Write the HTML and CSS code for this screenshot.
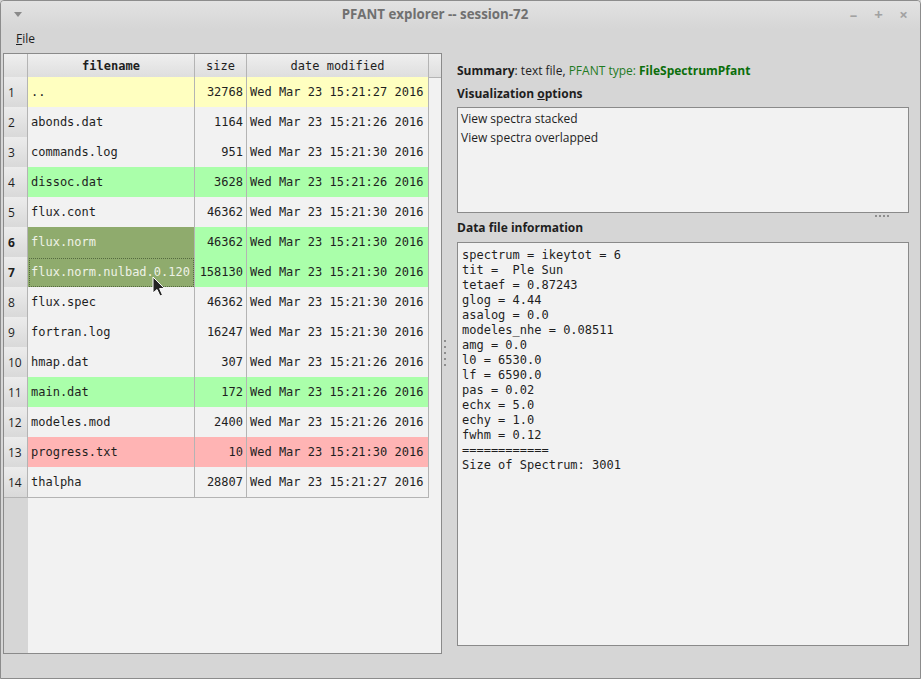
FILE: index.html
```html
<!DOCTYPE html>
<html>
<head>
<meta charset="utf-8">
<link rel="stylesheet" href="styles.css">
</head>
<body>
<div class="window">
  <div class="titlebar">
    <span class="tb-menu"></span>
    <span class="title">PFANT explorer -- session-72</span>
    <span class="tb-ctrls"><span>&#8211;</span><span>+</span><span>&#215;</span></span>
  </div>
  <div class="menubar"><span class="menu"><u>F</u>ile</span></div>
  <div class="main">
    <div class="tableview">
      <div class="hrow">
        <div class="hcell corner"></div>
        <div class="hcell bold">filename</div>
        <div class="hcell">size</div>
        <div class="hcell">date modified</div>
        <div class="hcell filler"></div>
      </div>
      <div class="row yellow"><div class="vh">1</div><div class="c fn">..</div><div class="c sz">32768</div><div class="c dt">Wed Mar 23 15:21:27 2016</div></div>
      <div class="row"><div class="vh">2</div><div class="c fn">abonds.dat</div><div class="c sz">1164</div><div class="c dt">Wed Mar 23 15:21:26 2016</div></div>
      <div class="row"><div class="vh">3</div><div class="c fn">commands.log</div><div class="c sz">951</div><div class="c dt">Wed Mar 23 15:21:30 2016</div></div>
      <div class="row green"><div class="vh">4</div><div class="c fn">dissoc.dat</div><div class="c sz">3628</div><div class="c dt">Wed Mar 23 15:21:26 2016</div></div>
      <div class="row"><div class="vh">5</div><div class="c fn">flux.cont</div><div class="c sz">46362</div><div class="c dt">Wed Mar 23 15:21:30 2016</div></div>
      <div class="row green"><div class="vh sel">6</div><div class="c fn selected">flux.norm</div><div class="c sz">46362</div><div class="c dt">Wed Mar 23 15:21:30 2016</div></div>
      <div class="row green"><div class="vh sel">7</div><div class="c fn selected focus">flux.norm.nulbad.0.120</div><div class="c sz">158130</div><div class="c dt">Wed Mar 23 15:21:30 2016</div></div>
      <div class="row"><div class="vh">8</div><div class="c fn">flux.spec</div><div class="c sz">46362</div><div class="c dt">Wed Mar 23 15:21:30 2016</div></div>
      <div class="row"><div class="vh">9</div><div class="c fn">fortran.log</div><div class="c sz">16247</div><div class="c dt">Wed Mar 23 15:21:30 2016</div></div>
      <div class="row"><div class="vh">10</div><div class="c fn">hmap.dat</div><div class="c sz">307</div><div class="c dt">Wed Mar 23 15:21:26 2016</div></div>
      <div class="row green"><div class="vh">11</div><div class="c fn">main.dat</div><div class="c sz">172</div><div class="c dt">Wed Mar 23 15:21:26 2016</div></div>
      <div class="row"><div class="vh">12</div><div class="c fn">modeles.mod</div><div class="c sz">2400</div><div class="c dt">Wed Mar 23 15:21:26 2016</div></div>
      <div class="row pink"><div class="vh">13</div><div class="c fn">progress.txt</div><div class="c sz">10</div><div class="c dt">Wed Mar 23 15:21:30 2016</div></div>
      <div class="row"><div class="vh">14</div><div class="c fn">thalpha</div><div class="c sz">28807</div><div class="c dt">Wed Mar 23 15:21:27 2016</div></div>
    </div>
    <div class="vsplit"><span class="vdots"></span></div>
    <div class="right">
      <div class="summary"><b>Summary</b>: text file, <span class="ptype">PFANT type: <b>FileSpectrumPfant</b></span></div>
      <div class="label">Visualization <u>o</u>ptions</div>
      <div class="listbox">
        <div class="item">View spectra stacked</div>
        <div class="item">View spectra overlapped</div>
      </div>
      <div class="hsplit"><span class="hdots"></span></div>
      <div class="label">Data file information</div>
      <div class="textbox">spectrum = ikeytot = 6
tit =  Ple Sun
tetaef = 0.87243
glog = 4.44
asalog = 0.0
modeles_nhe = 0.08511
amg = 0.0
l0 = 6530.0
lf = 6590.0
pas = 0.02
echx = 5.0
echy = 1.0
fwhm = 0.12
============
Size of Spectrum: 3001</div>
    </div>
  </div>
  <svg class="cursor" width="14" height="22" viewBox="0 0 14 22"><path d="M1 1 L1 17 L5 13.5 L8 20 L10.5 19 L7.6 12.6 L12.5 12.6 Z" fill="#222" stroke="#fff" stroke-width="1" stroke-linejoin="round"/></svg>
</div>
</body>
</html>
```

FILE: styles.css
```css
* { box-sizing: border-box; }
html, body { margin: 0; padding: 0; background: #d6d6d6; }
body { font-family: "Open Sans", "Noto Sans", sans-serif; font-size: 12px; color: #1e1e1e; }

.window {
  position: relative;
  width: 921px;
  height: 679px;
  border: 1px solid #8c8c8c;
  border-radius: 4px 4px 0 0;
  background: #d6d6d6;
  display: flex;
  flex-direction: column;
  overflow: hidden;
}

.titlebar {
  height: 28px;
  flex: none;
  display: flex;
  align-items: center;
  justify-content: center;
  position: relative;
  padding-right: 51px;
  padding-bottom: 2px;
  background: linear-gradient(#e2e2e2, #d6d6d6);
}
.title { font-weight: bold; font-size: 13.3px; color: #707070; }
.tb-menu {
  position: absolute; left: 13px; top: 11px;
  width: 0; height: 0;
  border-left: 4px solid transparent; border-right: 4px solid transparent;
  border-top: 5px solid #8a8a8a;
}
.tb-ctrls {
  position: absolute; right: 10px; top: 3px;
  display: flex; gap: 12px;
  color: #a2a2a2; font-size: 15px; font-weight: bold;
}
.tb-ctrls span { width: 13px; text-align: center; }

.menubar { height: 24px; flex: none; padding: 2px 0 0 15px; line-height: 16px; }
.menu { color: #1e1e1e; }

.main { display: flex; flex: none; height: 601px; padding-left: 2px; }

.tableview {
  width: 439px;
  height: 601px;
  border: 1px solid #8a8a8a;
  background: linear-gradient(to right, #d6d6d6 24px, #f2f2f2 24px);
  font-family: "DejaVu Sans Mono", monospace;
  font-size: 12px;
  color: #1e1e1e;
}
.hrow { display: grid; grid-template-columns: 24px 167px 52px 182px 12px; height: 23px; }
.hcell {
  background: linear-gradient(#efefef, #dedede);
  border-right: 1px solid #b4b4b4;
  border-bottom: 1px solid #b4b4b4;
  text-align: center;
  line-height: 22px;
  padding-top: 1px;
}
.hcell.filler { border-right: none; }
.hcell.bold { font-weight: bold; }

.row { display: grid; grid-template-columns: 24px 167px 52px 182px; height: 30px; }
.vh {
  background: linear-gradient(#ececec, #d9d9d9);
  border-right: 1px solid #b4b4b4;
  border-bottom: 1px solid #b4b4b4;
  font-family: "Open Sans", sans-serif;
  font-size: 12px;
  line-height: 29px;
  padding-top: 1px;
  padding-left: 4px;
  color: #1e1e1e;
}
.vh.sel { font-weight: bold; }
.c {
  background: #f2f2f2;
  border-right: 1px solid #b4b4b4;
  border-bottom: 1px solid #b4b4b4;
  line-height: 29px;
  padding-top: 1px;
  white-space: nowrap;
  overflow: hidden;
}
.fn { padding-left: 3px; }
.sz { text-align: right; padding-right: 3px; }
.dt { padding-left: 3px; }
.yellow .c { background: #ffffc0; }
.green .c { background: #aaffaa; }
.pink .c { background: #ffb4b4; }
.row .c.selected { background: #8fab6d; color: #eef2e6; }
.c.focus { outline: 1px dotted #556b40; outline-offset: -2px; }

.vsplit { width: 15px; flex: none; position: relative; }
.vdots {
  position: absolute; left: 2px; top: 287px;
  width: 2px; height: 28px;
  background: repeating-linear-gradient(#8e8e8e 0 2px, transparent 2px 6px);
}

.right { width: 452px; display: flex; flex-direction: column; }
.summary { margin-top: 10px; line-height: 16px; height: 16px; }
.summary b { font-weight: bold; }
.ptype { color: #1f7a1f; }
.ptype b { color: #0b6e0b; }
.label { font-weight: bold; line-height: 16px; height: 16px; margin-top: 7px; }
.listbox {
  margin-top: 5px;
  height: 106px;
  border: 1px solid #8a8a8a;
  background: #f2f2f2;
  padding: 1px 3px;
}
.item { line-height: 19px; height: 19px; }
.hsplit { height: 7px; position: relative; }
.hdots {
  position: absolute; left: 418px; top: 2px;
  width: 16px; height: 2px;
  background: repeating-linear-gradient(to right, #8e8e8e 0 2px, transparent 2px 4px);
}
.hsplit + .label { margin-top: 0; }
.textbox {
  margin-top: 6px;
  height: 404px;
  border: 1px solid #8a8a8a;
  background: #f2f2f2;
  padding: 5px 4px;
  font-family: "DejaVu Sans Mono", monospace;
  font-size: 12px;
  line-height: 15px;
  white-space: pre;
  color: #1e1e1e;
}

.cursor { position: absolute; left: 151px; top: 275px; }
```
